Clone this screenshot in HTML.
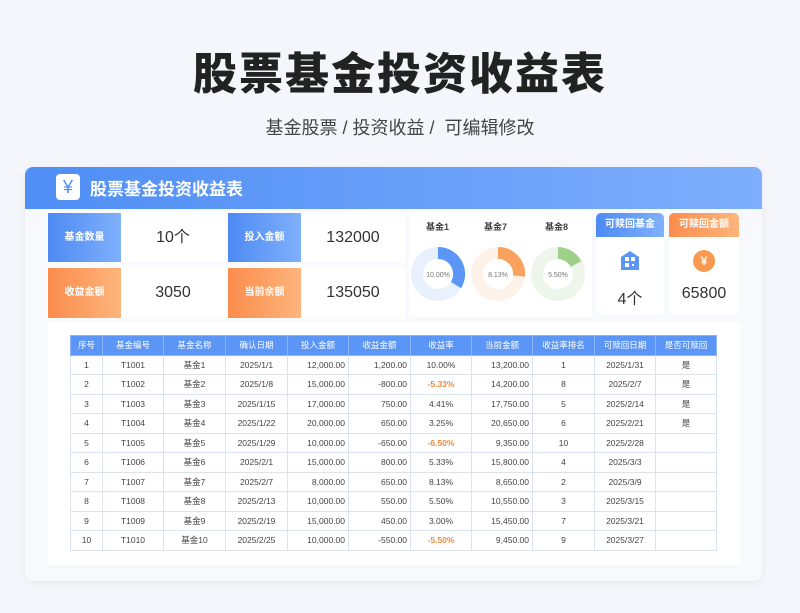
<!DOCTYPE html>
<html><head><meta charset="utf-8"><style>
*{margin:0;padding:0;box-sizing:border-box}
body{width:800px;height:613px;background:#f4f6fb;font-family:"Liberation Sans","Noto Sans CJK SC",sans-serif;position:relative;overflow:hidden}
.abs{position:absolute}
h1{position:absolute;top:38px;left:0;width:800px;text-align:center;font-size:44px;font-weight:900;color:#222;letter-spacing:2px}
.sub{top:114px;left:0;width:800px;text-align:center;font-size:18px;color:#444}
.card{left:25px;top:167px;width:737px;height:414px;background:#f7f9fd;border-radius:8px;box-shadow:0 2px 8px rgba(0,0,0,.06)}
.hdr{left:25px;top:167px;width:737px;height:42px;border-radius:8px 8px 0 0;background:linear-gradient(90deg,#4f8ef5,#7eaefc)}
.yen{left:56px;top:174px;width:24px;height:26px;background:#fff;border-radius:4px;color:#4f8ef5;font-size:18px;text-align:center;line-height:26px}
.title{left:90px;top:175px;color:#fff;font-size:17px;font-weight:bold}
.lb{color:#fff;font-size:10px;font-weight:bold;text-align:center}
.bl{background:linear-gradient(90deg,#4d8af3,#7fb0fb)}
.or{background:linear-gradient(90deg,#fb8c4d,#fdb57c)}
.val{background:#fff;font-size:16px;color:#333;text-align:center}
table{position:absolute;left:70px;top:335px;border-collapse:collapse;font-size:8.5px;color:#444;background:#fff}
td,th{border:1px solid #d9e3f3;height:19.5px;text-align:center;padding:0 3px}
th{background:#5b95f6;color:#fff;font-weight:normal;border-color:#8bb3f7}
td.r{text-align:right}
.neg{color:#f18a3c;font-weight:bold}
</style></head><body>
<h1>股票基金投资收益表</h1>
<div class="abs sub">基金股票 / 投资收益 /&nbsp; 可编辑修改</div>
<div class="abs card"></div>
<div class="abs hdr"></div>
<div class="abs yen">¥</div>
<div class="abs title">股票基金投资收益表</div>
<div class="abs" style="left:45px;top:211px;width:362px;height:110px;background:#fafbfe"></div>
<div class="abs lb bl" style="left:48px;top:213px;width:73px;height:49px;line-height:49px">基金数量</div>
<div class="abs val" style="left:121px;top:213px;width:104px;height:49px;line-height:49px">10个</div>
<div class="abs lb bl" style="left:228px;top:213px;width:73px;height:49px;line-height:49px">投入金额</div>
<div class="abs val" style="left:301px;top:213px;width:104px;height:49px;line-height:49px">132000</div>
<div class="abs lb or" style="left:48px;top:268px;width:73px;height:50px;line-height:50px">收益金额</div>
<div class="abs val" style="left:121px;top:268px;width:104px;height:50px;line-height:50px">3050</div>
<div class="abs lb or" style="left:228px;top:268px;width:73px;height:50px;line-height:50px">当前余额</div>
<div class="abs val" style="left:301px;top:268px;width:104px;height:50px;line-height:50px">135050</div>
<div class="abs" style="left:409px;top:211px;width:183px;height:106px;background:#fff"></div>
<div class="abs" style="left:426px;top:220px;font-size:9px;font-weight:bold;color:#444">基金1</div>
<div class="abs" style="left:484px;top:220px;font-size:9px;font-weight:bold;color:#444">基金7</div>
<div class="abs" style="left:545px;top:220px;font-size:9px;font-weight:bold;color:#444">基金8</div>
<svg class="abs" style="left:409px;top:245px" width="183" height="60">
<g font-size="7" fill="#777" text-anchor="middle" font-family="Liberation Sans">
<circle cx="29" cy="29" r="21" fill="none" stroke="#e8f0fd" stroke-width="12"/>
<path d="M29 8 A21 21 0 0 1 47 40" fill="none" stroke="#5b95f6" stroke-width="12"/>
<text x="29" y="32">10.00%</text>
<circle cx="89" cy="29" r="21" fill="none" stroke="#fdf3ea" stroke-width="12"/>
<path d="M89 8 A21 21 0 0 1 110 31" fill="none" stroke="#fba35e" stroke-width="12"/>
<text x="89" y="32">8.13%</text>
<circle cx="149" cy="29" r="21" fill="none" stroke="#eef5ea" stroke-width="12"/>
<path d="M149 8 A21 21 0 0 1 167 19" fill="none" stroke="#9fd08a" stroke-width="12"/>
<text x="149" y="32">5.50%</text></g></svg>
<div class="abs" style="left:596px;top:213px;width:68px;height:102px;background:#fff;border-radius:5px;overflow:hidden">
<div class="lb bl" style="height:24px;line-height:24px">可赎回基金</div>
<svg style="position:absolute;left:25px;top:38px" width="18" height="20"><path d="M0 6 L9 0 L18 6 V19 H0Z" fill="#5b95f6"/><g fill="#fff"><rect x="4" y="6" width="4" height="4"/><rect x="10" y="6" width="4" height="4"/><rect x="4" y="12" width="4" height="4"/><rect x="11" y="13" width="2" height="2"/></g></svg>
<div style="position:absolute;top:72px;width:68px;text-align:center;font-size:16px;color:#333">4个</div></div>
<div class="abs" style="left:669px;top:213px;width:70px;height:102px;background:#fff;border-radius:5px;overflow:hidden">
<div class="lb or" style="height:24px;line-height:24px">可赎回金额</div>
<div style="position:absolute;left:24px;top:37px;width:22px;height:22px;border-radius:50%;background:#fa9a50;color:#fff;font-size:12px;text-align:center;line-height:22px;font-weight:bold">¥</div>
<div style="position:absolute;top:72px;width:70px;text-align:center;font-size:16px;color:#333">65800</div></div>
<div class="abs" style="left:48px;top:322px;width:692px;height:243px;background:#fff"></div>
<table>
<tr><th style="width:32px">序号</th><th style="width:61px">基金编号</th><th style="width:62px">基金名称</th><th style="width:62px">确认日期</th><th style="width:61px">投入金额</th><th style="width:62px">收益金额</th><th style="width:61px">收益率</th><th style="width:61px">当前金额</th><th style="width:62px">收益率排名</th><th style="width:61px">可赎回日期</th><th style="width:61px">是否可赎回</th></tr>
<tr><td>1</td><td>T1001</td><td>基金1</td><td>2025/1/1</td><td class="r">12,000.00</td><td class="r">1,200.00</td><td>10.00%</td><td class="r">13,200.00</td><td>1</td><td>2025/1/31</td><td>是</td></tr>
<tr><td>2</td><td>T1002</td><td>基金2</td><td>2025/1/8</td><td class="r">15,000.00</td><td class="r">-800.00</td><td class="neg">-5.33%</td><td class="r">14,200.00</td><td>8</td><td>2025/2/7</td><td>是</td></tr>
<tr><td>3</td><td>T1003</td><td>基金3</td><td>2025/1/15</td><td class="r">17,000.00</td><td class="r">750.00</td><td>4.41%</td><td class="r">17,750.00</td><td>5</td><td>2025/2/14</td><td>是</td></tr>
<tr><td>4</td><td>T1004</td><td>基金4</td><td>2025/1/22</td><td class="r">20,000.00</td><td class="r">650.00</td><td>3.25%</td><td class="r">20,650.00</td><td>6</td><td>2025/2/21</td><td>是</td></tr>
<tr><td>5</td><td>T1005</td><td>基金5</td><td>2025/1/29</td><td class="r">10,000.00</td><td class="r">-650.00</td><td class="neg">-6.50%</td><td class="r">9,350.00</td><td>10</td><td>2025/2/28</td><td></td></tr>
<tr><td>6</td><td>T1006</td><td>基金6</td><td>2025/2/1</td><td class="r">15,000.00</td><td class="r">800.00</td><td>5.33%</td><td class="r">15,800.00</td><td>4</td><td>2025/3/3</td><td></td></tr>
<tr><td>7</td><td>T1007</td><td>基金7</td><td>2025/2/7</td><td class="r">8,000.00</td><td class="r">650.00</td><td>8.13%</td><td class="r">8,650.00</td><td>2</td><td>2025/3/9</td><td></td></tr>
<tr><td>8</td><td>T1008</td><td>基金8</td><td>2025/2/13</td><td class="r">10,000.00</td><td class="r">550.00</td><td>5.50%</td><td class="r">10,550.00</td><td>3</td><td>2025/3/15</td><td></td></tr>
<tr><td>9</td><td>T1009</td><td>基金9</td><td>2025/2/19</td><td class="r">15,000.00</td><td class="r">450.00</td><td>3.00%</td><td class="r">15,450.00</td><td>7</td><td>2025/3/21</td><td></td></tr>
<tr><td>10</td><td>T1010</td><td>基金10</td><td>2025/2/25</td><td class="r">10,000.00</td><td class="r">-550.00</td><td class="neg">-5.50%</td><td class="r">9,450.00</td><td>9</td><td>2025/3/27</td><td></td></tr>
</table>
</body></html>
